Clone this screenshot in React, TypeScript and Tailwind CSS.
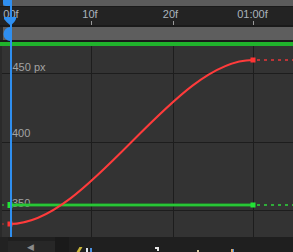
import React from "react";

const font = { fontFamily: '"Liberation Sans", Arial, sans-serif' };

const rulerLabels = [
  { x: 11, t: "00f" },
  { x: 90, t: "10f" },
  { x: 170.5, t: "20f" },
  { x: 252.5, t: "01:00f" },
];
const ticks = [91, 173, 253];

function Graph() {
  return (
    <svg width="293" height="191" className="block" style={font}>
      <rect x="0" y="0" width="293" height="191" fill="#333333" />
      <rect x="0" y="0" width="2" height="191" fill="#2a2a2a" />
      {[27.5, 96.5, 164.5].map((y) => (
        <line key={y} x1="2" x2="293" y1={y} y2={y} stroke="#1d1d1d" strokeWidth="1" />
      ))}
      {ticks.map((x) => (
        <line key={x} x1={x + 0.5} x2={x + 0.5} y1="0" y2="191" stroke="#1d1d1d" strokeWidth="1" />
      ))}
      <g fill="#a3a3a3" fontSize="11">
        <text x="12.5" y="24.5">450 px</text>
        <text x="12" y="91.3">400</text>
        <text x="12" y="160.6">350</text>
      </g>
      {/* value line */}
      <line x1="10" x2="253" y1="159" y2="159" stroke="#1fae2b" strokeWidth="3" />
      <line x1="10" x2="253" y1="159" y2="159" stroke="#33e043" strokeWidth="1.2" />
      <line x1="257" x2="293" y1="159" y2="159" stroke="#2fd83c" strokeWidth="1.5" strokeDasharray="3 4" />
      <rect x="7.5" y="156" width="5" height="6" fill="#22e436" />
      <rect x="250.5" y="156.5" width="5" height="5" fill="#22e436" />
      <line x1="2" x2="4" y1="159" y2="159" stroke="#2fd83c" strokeWidth="1" />
      {/* red curve */}
      <path d="M10 178 C90 178 173 14 253 14" fill="none" stroke="#ff3b3b" strokeWidth="2" />
      <line x1="257" x2="293" y1="14" y2="14" stroke="#e8363a" strokeWidth="1.5" strokeDasharray="3 4" />
      <rect x="7.5" y="175.5" width="5" height="5" fill="#ff3434" />
      <rect x="250.5" y="11.5" width="5" height="5" fill="#ff3434" />
      <line x1="2" x2="4" y1="178" y2="178" stroke="#c93030" strokeWidth="1" />
    </svg>
  );
}

export default function App() {
  return (
    <div className="relative w-[293px] h-[252px] overflow-hidden bg-[#1f1f1f] flex flex-col" style={font}>
      <div className="h-[6px] bg-[#5b5b5b] border-l-[3px] border-[#2a2a2a]" />
      <div className="h-[1px] bg-[#1a1a1a]" />
      <div className="relative h-[18px] bg-[#232323]">
        {rulerLabels.map((l) => (
          <span
            key={l.t}
            className="absolute top-[2px] -translate-x-1/2 text-[11px] leading-[11px] text-[#aab3bd] whitespace-nowrap"
            style={{ left: l.x }}
          >
            {l.t}
          </span>
        ))}
        {ticks.map((x) => (
          <div key={x} className="absolute bottom-0 h-[4px] w-px bg-[#9a9a9a]" style={{ left: x }} />
        ))}
      </div>
      <div className="h-[2px] bg-[#1a1a1a]" />
      <div className="h-[13px] bg-[#5e5e5e] border-l-[3px] border-[#2a2a2a]" />
      <div className="h-[2px] bg-[#1a1a1a]" />
      <div className="h-[4px] bg-[#20b32c]" />
      <Graph />
      <div className="flex-1 flex bg-[#1f1f1f]">
        <div className="w-[8px] bg-[#222222]" />
        <div className="w-[47px] mt-[4px] bg-[#272727] flex items-end pl-[19px]">
          <span className="text-[9px] leading-[9px] text-[#8a8a8a]">◀</span>
        </div>
        <div className="w-[14px] bg-[#1a1a1a]" />
        <div className="flex-1 flex items-end">
          <div className="ml-[9px] w-[3px] h-[5px] bg-[#c9b43a] skew-x-[-30deg]" />
          <div className="ml-[5px] w-[2px] h-[4px] bg-[#dfe6ef]" />
          <div className="ml-[2px] w-[2px] h-[4px] bg-[#4a90e2]" />
          <div className="ml-[63px] mb-[1px] w-[4px] h-[4px] border-t-[2px] border-r-[2px] border-[#e6e6e6]" />
          <div className="ml-[38px] w-[2px] h-[2px] bg-[#d8c7a0]" />
          <div className="ml-[32px] w-[2px] h-[3px] bg-[#d9a46a]" />
          <div className="w-[1px] h-[3px] bg-[#4a90e2]" />
        </div>
      </div>
      {/* playhead */}
      <div className="absolute left-[10px] top-0 h-[237px] w-[1.5px] bg-[#2f8ff0]" />
      <svg className="absolute left-0 top-0" width="20" height="42">
        <path d="M3 0 H12 V3 Q12 6 9 6 H6 Q3 6 3 3 Z" fill="#2f8ff0" />
        <path d="M4 17 H16 V19 Q15 22 10.5 25.5 Q6 22 4 19 Z" fill="#2f8ff0" />
        <path d="M10.5 27 A7 7 0 0 0 10.5 41 Z" fill="#2f8ff0" />
      </svg>
    </div>
  );
}
